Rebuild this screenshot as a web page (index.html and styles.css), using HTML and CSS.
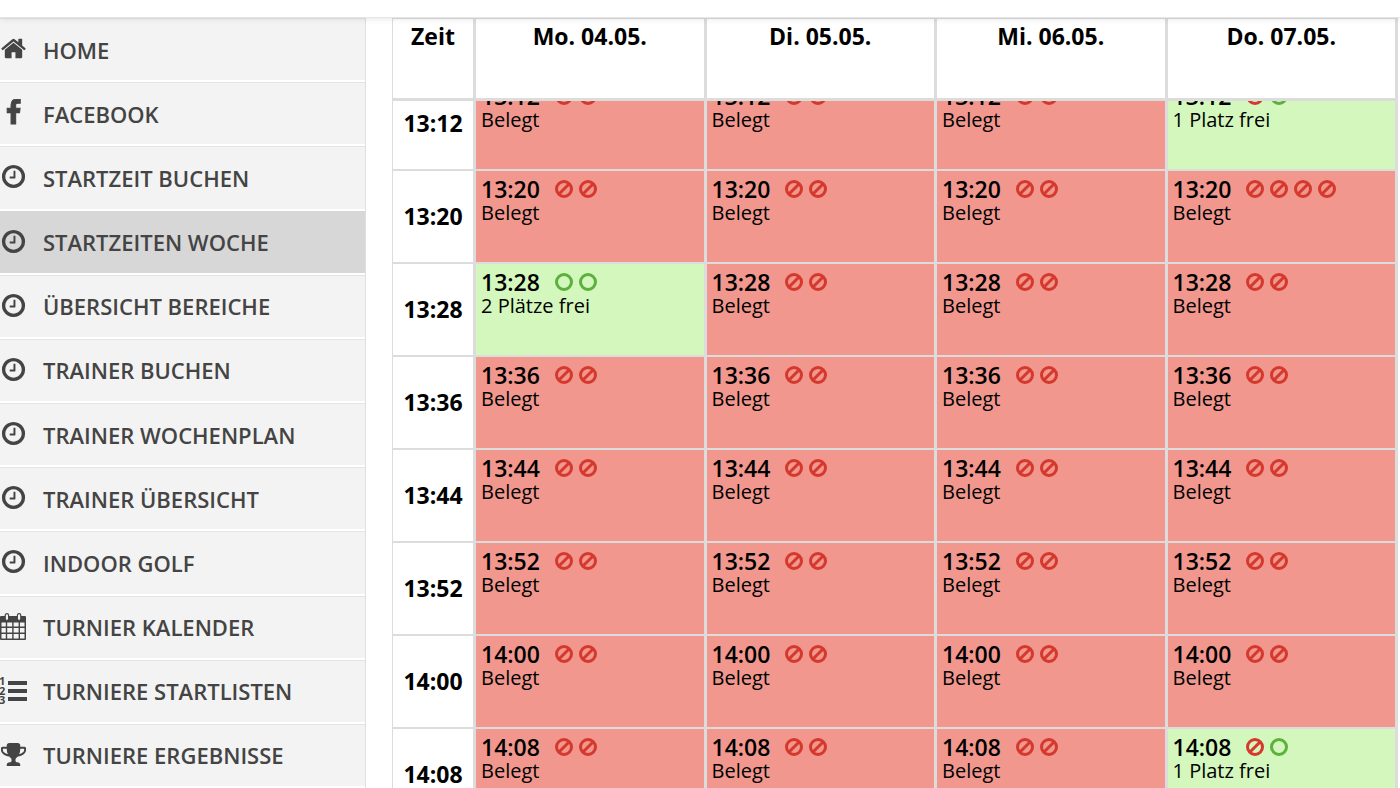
FILE: index.html
```html
<!DOCTYPE html>
<html lang="de">

<head>
    <meta charset="UTF-8">
    <meta name="viewport" content="width=device-width, initial-scale=1.0">
    <title>Startzeiten Woche</title>
    <link rel="stylesheet" href="styles.css">
</head>

<body>
    <svg class="sprite" aria-hidden="true">
        <symbol id="home" viewBox="0 0 1792 1792">
            <path d="M1472 992v480q0 26-19 45t-45 19h-384v-384h-256v384h-384q-26 0-45-19t-19-45v-480q0-1 .5-3t.5-3l575-474 575 474q1 2 1 6zm223-69l-62 74q-8 9-21 11h-3q-13 0-21-7l-692-577-692 577q-12 8-24 7-13-2-21-11l-62-74q-8-10-7-23.5t11-21.5l719-599q32-26 76-26t76 26l244 204v-195q0-14 9-23t23-9h192q14 0 23 9t9 23v408l219 182q10 8 11 21.5t-7 23.5z" />
        </symbol>
        <symbol id="facebook" viewBox="0 0 1792 1792">
            <path d="M1343 12v264h-157q-86 0-116 36t-30 108v189h293l-39 296h-254v759h-306v-759h-255v-296h255v-218q0-186 104-288.5t277-102.5q147 0 228 12z" />
        </symbol>
        <symbol id="clock" viewBox="0 0 1792 1792">
            <path d="M1024 544v448q0 14-9 23t-23 9h-320q-14 0-23-9t-9-23v-64q0-14 9-23t23-9h224v-352q0-14 9-23t23-9h64q14 0 23 9t9 23zm416 352q0-148-73-273t-198-198-273-73-273 73-198 198-73 273 73 273 198 198 273 73 273-73 198-198 73-273zm224 0q0 209-103 385.5t-279.5 279.5-385.5 103-385.5-103-279.5-279.5-103-385.5 103-385.5 279.5-279.5 385.5-103 385.5 103 279.5 279.5 103 385.5z" />
        </symbol>
        <symbol id="calendar" viewBox="1 0 27 27">
            <path d="M2 3h24q1 0 1 1v22q0 1-1 1h-24q-1 0-1-1v-22q0-1 1-1z" />
            <path class="paper" d="M2.5 9.5h4.3v4h-4.3zM8.2 9.5h5v4h-5zM14.6 9.5h5v4h-5zM21 9.5h4.5v4h-4.5zM2.5 15h4.3v4.5h-4.3zM8.2 15h5v4.5h-5zM14.6 15h5v4.5h-5zM21 15h4.5v4.5h-4.5zM2.5 21h4.3v4.5h-4.3zM8.2 21h5v4.5h-5zM14.6 21h5v4.5h-5zM21 21h4.5v4.5h-4.5z" />
            <rect class="ring" x="6.2" y="0.7" width="3.4" height="6.8" rx="1.7" />
            <rect class="ring" x="18.4" y="0.7" width="3.4" height="6.8" rx="1.7" />
        </symbol>
        <symbol id="list" viewBox="0 0 27 27">
            <path d="M8 4h19v4h-19zM8 12h19v4h-19zM8 20h19v4h-19z" />
            <text x="-1" y="8">1</text>
            <text x="-1" y="18">2</text>
            <text x="-1" y="27">3</text>
        </symbol>
        <symbol id="trophy" viewBox="0 0 1792 1792">
            <path d="M522 883q-74-162-74-371h-256v96q0 78 94.5 162t235.5 113zm1078-275v-96h-256q0 209-74 371 141-29 235.5-113t94.5-162zm128-128v128q0 71-41.5 143t-112 130-173 97.5-215.5 44.5q-42 54-95 95-38 34-52.5 72.5t-14.5 89.5q0 54 30.5 91t97.5 37q75 0 133.5 45.5t58.5 114.5v64q0 14-9 23t-23 9h-832q-14 0-23-9t-9-23v-64q0-69 58.5-114.5t133.5-45.5q67 0 97.5-37t30.5-91q0-51-14.5-89.5t-52.5-72.5q-53-41-95-95-113-5-215.5-44.5t-173-97.5-112-130-41.5-143v-128q0-40 28-68t68-28h288v-96q0-66 47-113t113-47h576q66 0 113 47t47 113v96h288q40 0 68 28t28 68z" />
        </symbol>
        <symbol id="taken" viewBox="0 0 18 18">
            <circle cx="9" cy="9" r="7.5" />
            <path d="M4 14l10-10" />
        </symbol>
        <symbol id="free" viewBox="0 0 18 18">
            <circle cx="9" cy="9" r="7.5" />
        </symbol>
    </svg>

    <header class="topbar"></header>
    <div class="page">
        <nav class="menu">
            <a href="#"><svg><use href="#home" /></svg>HOME</a>
            <a href="#"><svg class="bold"><use href="#facebook" /></svg>FACEBOOK</a>
            <a href="#"><svg><use href="#clock" /></svg>STARTZEIT BUCHEN</a>
            <a href="#" class="active"><svg><use href="#clock" /></svg>STARTZEITEN WOCHE</a>
            <a href="#"><svg><use href="#clock" /></svg>ÜBERSICHT BEREICHE</a>
            <a href="#"><svg><use href="#clock" /></svg>TRAINER BUCHEN</a>
            <a href="#"><svg><use href="#clock" /></svg>TRAINER WOCHENPLAN</a>
            <a href="#"><svg><use href="#clock" /></svg>TRAINER ÜBERSICHT</a>
            <a href="#"><svg><use href="#clock" /></svg>INDOOR GOLF</a>
            <a href="#"><svg><use href="#calendar" /></svg>TURNIER KALENDER</a>
            <a href="#"><svg><use href="#list" /></svg>TURNIERE STARTLISTEN</a>
            <a href="#"><svg><use href="#trophy" /></svg>TURNIERE ERGEBNISSE</a>
        </nav>
        <main class="schedule">
            <table>
                <thead>
                    <tr>
                        <th class="time">Zeit</th>
                        <th>Mo. 04.05.</th>
                        <th>Di. 05.05.</th>
                        <th>Mi. 06.05.</th>
                        <th>Do. 07.05.</th>
                    </tr>
                </thead>
                <tbody id="slots"></tbody>
            </table>
        </main>
    </div>
    <script>
        // x = taken, o = free, one letter per place
        var rows = [
            ["13:12", "xx", "xx", "xx", "xo"],
            ["13:20", "xx", "xx", "xx", "xxxx"],
            ["13:28", "oo", "xx", "xx", "xx"],
            ["13:36", "xx", "xx", "xx", "xx"],
            ["13:44", "xx", "xx", "xx", "xx"],
            ["13:52", "xx", "xx", "xx", "xx"],
            ["14:00", "xx", "xx", "xx", "xx"],
            ["14:08", "xx", "xx", "xx", "xo"]
        ];

        function label(free) {
            if (free == 0) return "Belegt";
            return free == 1 ? "1 Platz frei" : free + " Plätze frei";
        }

        function cell(time, places) {
            var free = places.split("o").length - 1;
            var icons = "";
            for (const p of places) {
                var type = p == "x" ? "taken" : "free";
                icons += "<svg class=\"place " + type + "\"><use href=\"#" + type + "\" /></svg>";
            }
            return "<td class=\"" + (free ? "open" : "full") + "\"><div class=\"slot\"><strong>" + time + "</strong>" + icons + "</div><div>" + label(free) + "</div></td>";
        }

        document.querySelector("#slots").innerHTML = rows.map(function (r) {
            return "<tr><th class=\"time\">" + r[0] + "</th>" + r.slice(1).map(p => cell(r[0], p)).join("") + "</tr>";
        }).join("");

        document.querySelector(".schedule").scrollTop = 23;
    </script>
</body>

</html>
```
FILE: styles.css
```css
* {
    box-sizing: border-box;
}

body {
    margin: 0;
    height: 100vh;
    display: flex;
    flex-direction: column;
    overflow: hidden;
    background-color: #fff;
    color: #000;
    font-family: "Open Sans", "Noto Sans", sans-serif;
    font-size: 20px;
    line-height: 24px;
}

.sprite {
    display: none;
}

.topbar {
    height: 18px;
    flex: none;
    z-index: 2;
    border-bottom: 1px solid #e6e6e6;
    box-shadow: 0 1px 6px rgba(0, 0, 0, 0.1);
}

.page {
    flex: 1;
    min-height: 0;
    display: flex;
}

.menu {
    width: 366px;
    flex: none;
    display: flex;
    flex-direction: column;
    border-right: 1px solid #dfdfdf;
    background-color: #f3f3f3;
}

.menu a {
    flex: 1;
    display: flex;
    align-items: center;
    gap: 16px;
    border-top: 1px solid #e4e4e4;
    border-bottom: 2px solid #fff;
    color: #444;
    font-size: 22px;
    font-weight: 600;
    text-decoration: none;
}

.menu a.active {
    background-color: #d7d7d7;
    border-top-color: #d7d7d7;
}

.menu svg {
    width: 27px;
    height: 27px;
    margin-bottom: 2px;
    fill: #444;
}

.menu svg.bold {
    stroke: #444;
    stroke-width: 70px;
}

.paper {
    fill: #f3f3f3;
}

.ring {
    fill: #f3f3f3;
    stroke: #444;
    stroke-width: 1.2px;
}

#list text {
    font-size: 11px;
    font-weight: 700;
}

.schedule {
    flex: 1;
    overflow: hidden;
    margin-left: 26px;
    padding-right: 2px;
}

table {
    width: 100%;
    table-layout: fixed;
    border-collapse: separate;
    border-spacing: 0;
    border-left: 1px solid #dcdcdc;
}

th {
    padding: 0 0 2px;
    font-size: 23px;
    font-weight: 700;
}

th,
td {
    border-right: 3px solid #dcdcdc;
    border-bottom: 2px solid #dcdcdc;
}

thead th {
    position: sticky;
    top: 0;
    height: 83px;
    padding-top: 5px;
    vertical-align: top;
    background-color: #fff;
    border-top: 1px solid #dcdcdc;
    border-bottom-width: 3px;
}

.time {
    width: 83px;
}

td {
    height: 93px;
    padding: 5px;
    vertical-align: top;
}

.full {
    background-color: #f1978e;
}

.open {
    background-color: #d3f7bd;
}

.slot {
    height: 25px;
    display: flex;
    align-items: center;
    gap: 6px;
}

.slot strong {
    margin-right: 9px;
    font-size: 23px;
    font-weight: 600;
}

.place {
    width: 18px;
    height: 18px;
    fill: none;
    stroke-width: 3px;
}

.place path {
    stroke-width: 2px;
}

.taken {
    stroke: #d5382d;
}

.free {
    stroke: #5cb03c;
}
```
